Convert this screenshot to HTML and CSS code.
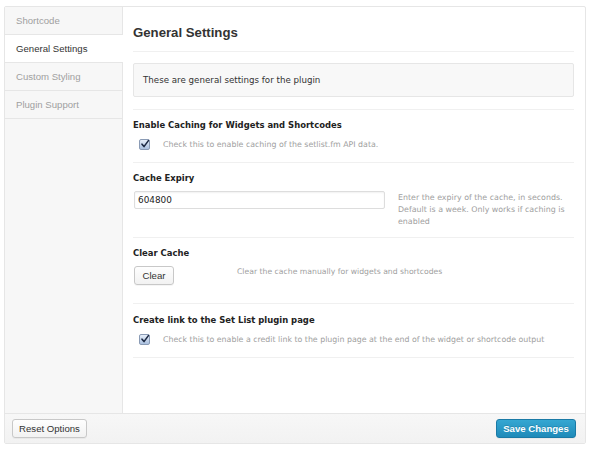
FILE: index.html
```html
<!DOCTYPE html>
<html>
<head>
<meta charset="utf-8">
<link rel="stylesheet" href="styles.css">
</head>
<body>
<div class="wrap">
  <div class="panel">
    <nav class="sidebar">
      <div class="tab">Shortcode</div>
      <div class="tab active">General Settings</div>
      <div class="tab">Custom Styling</div>
      <div class="tab">Plugin Support</div>
    </nav>
    <main class="main">
      <h2 class="title">General Settings</h2>
      <div class="intro">These are general settings for the plugin</div>
      <div class="section">
        <div class="label">Enable Caching for Widgets and Shortcodes</div>
        <div class="check-row">
          <span class="checkbox"><svg viewBox="0 0 10 10" width="10" height="10"><path d="M2 5.2 L4 7.6 L8.4 1.6" fill="none" stroke="#1d2a44" stroke-width="1.6" stroke-linecap="round" stroke-linejoin="round"/></svg></span>
          <span class="desc">Check this to enable caching of the setlist.fm API data.</span>
        </div>
      </div>
      <div class="section sec-expiry">
        <div class="label">Cache Expiry</div>
        <div class="field-row">
          <div class="input">604800</div>
          <div class="help">Enter the expiry of the cache, in seconds. Default is a week. Only works if caching is enabled</div>
        </div>
      </div>
      <div class="section sec-clear">
        <div class="label">Clear Cache</div>
        <div class="field-row">
          <button class="btn btn-clear">Clear</button>
          <div class="help help-clear">Clear the cache manually for widgets and shortcodes</div>
        </div>
      </div>
      <div class="section sec-link">
        <div class="label">Create link to the Set List plugin page</div>
        <div class="check-row">
          <span class="checkbox"><svg viewBox="0 0 10 10" width="10" height="10"><path d="M2 5.2 L4 7.6 L8.4 1.6" fill="none" stroke="#1d2a44" stroke-width="1.6" stroke-linecap="round" stroke-linejoin="round"/></svg></span>
          <span class="desc">Check this to enable a credit link to the plugin page at the end of the widget or shortcode output</span>
        </div>
      </div>
    </main>
  </div>
  <footer class="footer">
    <button class="btn btn-reset">Reset Options</button>
    <button class="btn btn-save">Save Changes</button>
  </footer>
</div>
</body>
</html>
```
FILE: styles.css
```css
html, body {
  margin: 0;
  padding: 0;
  background: #fff;
}
.wrap {
  margin: 6px 0 0 4px;
  width: 580px;
  border: 1px solid #e6e6e6;
  border-radius: 2px;
  font-family: "DejaVu Sans", sans-serif;
  color: #333;
}
.panel {
  display: flex;
  height: 406px;
}
.sidebar {
  width: 117px;
  flex: none;
  background: #f7f7f7;
  border-right: 1px solid #e6e6e6;
}
.tab {
  height: 27px;
  line-height: 27px;
  border-bottom: 1px solid #e6e6e6;
  padding-left: 11px;
  font-family: "Liberation Sans", Arial, sans-serif;
  font-size: 9.6px;
  color: #a0a0a0;
}
.tab.active {
  background: #fff;
  color: #333;
  margin-right: -1px;
  position: relative;
}
.main {
  flex: 1;
  padding: 0 11px 0 10px;
}
.title {
  margin: 0;
  height: 45px;
  box-sizing: border-box;
  padding-top: 18px;
  line-height: 16px;
  font-family: "Liberation Sans", Arial, sans-serif;
  font-size: 13.2px;
  font-weight: bold;
  color: #333;
  border-bottom: 1px solid #f0f0f0;
}
.intro {
  margin: 11px 0 12px;
  height: 32px;
  line-height: 32px;
  padding-left: 9px;
  background: #f8f8f8;
  border: 1px solid #e6e6e6;
  border-radius: 2px;
  font-size: 8.7px;
  color: #333;
}
.section {
  border-top: 1px solid #f0f0f0;
  padding: 8px 0 12px;
}
.section:last-child {
  border-bottom: 1px solid #f0f0f0;
}
.sec-expiry {
  padding-bottom: 10px;
}
.sec-clear {
  padding-top: 8px;
  padding-bottom: 18px;
}
.sec-link {
  padding-top: 9px;
}
.label {
  font-size: 8.45px;
  font-weight: bold;
  line-height: 14px;
  color: #222;
  margin-bottom: 6px;
}
.check-row {
  display: flex;
  align-items: center;
  height: 12px;
  padding-left: 6px;
}
.checkbox {
  width: 9px;
  height: 9px;
  border: 1px solid #8a9bb5;
  border-radius: 2px;
  background: linear-gradient(#e6eef9, #aac0df);
  position: relative;
  flex: none;
}
.checkbox svg {
  position: absolute;
  left: 0;
  top: -1px;
}
.desc {
  margin-left: 13px;
  font-size: 7.85px;
  color: #a0a0a0;
}
.field-row {
  display: flex;
  align-items: flex-start;
  margin-top: 2px;
}
.input {
  margin-left: 1px;
  width: 246px;
  height: 16px;
  line-height: 16px;
  padding-left: 3px;
  border: 1px solid #ddd;
  border-radius: 2px;
  box-shadow: inset 0 1px 2px rgba(0,0,0,0.06);
  font-size: 8.9px;
  color: #222;
  flex: none;
}
.help {
  margin-left: 13px;
  margin-top: 1px;
  font-size: 7.9px;
  line-height: 11.8px;
  color: #a0a0a0;
}
.help-clear {
  margin-left: 63px;
  margin-top: 0;
  font-size: 7.7px;
}
.btn {
  font-family: "Liberation Sans", Arial, sans-serif;
  font-size: 9.6px;
  height: 19px;
  padding: 0;
  border: 1px solid #c8c8c8;
  border-radius: 3px;
  background: linear-gradient(#fefefe, #f2f2f2);
  color: #333;
  box-shadow: 0 1px 0 rgba(0,0,0,0.04);
}
.btn-clear {
  margin-left: 1px;
  width: 40px;
}
.footer {
  height: 29px;
  border-top: 1px solid #e6e6e6;
  background: linear-gradient(#f7f7f7, #f2f2f2);
  display: flex;
  align-items: center;
  justify-content: space-between;
  padding: 0 9px 0 7px;
}
.btn-reset {
  width: 75px;
}
.btn-save {
  width: 80px;
  font-weight: bold;
  color: #fff;
  border-color: #1a7aa6;
  background: linear-gradient(#35a7d2, #1f8ab9);
  text-shadow: 0 -1px 0 rgba(0,0,0,0.15);
}
```
